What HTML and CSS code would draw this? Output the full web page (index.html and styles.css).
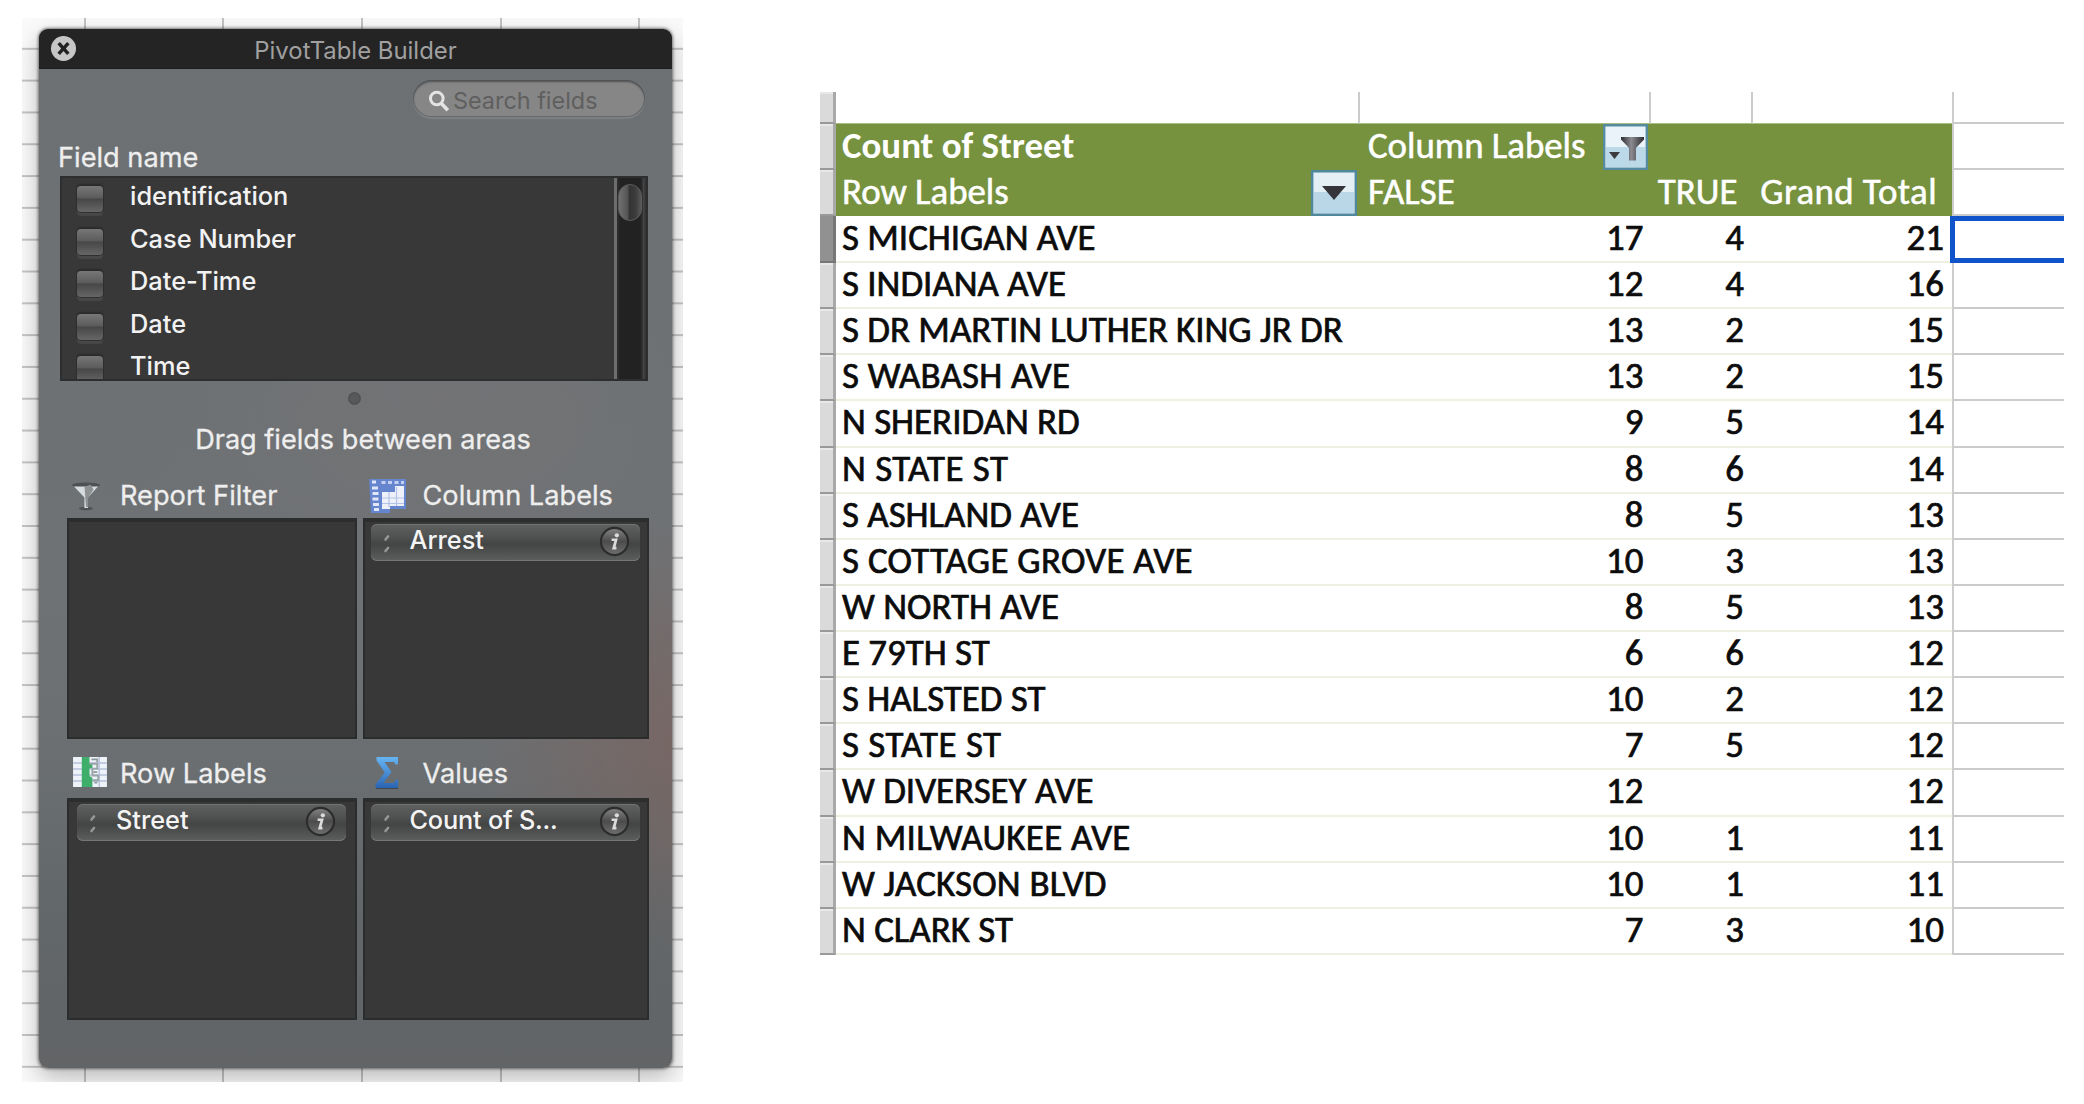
FILE: index.html
```html
<!DOCTYPE html>
<html lang="en">
<head>
<meta charset="utf-8">
<title>PivotTable Builder</title>
<link rel="stylesheet" href="styles.css">
</head>
<body>
<svg width="0" height="0" class="defs">
  <defs>
    <linearGradient id="knob" x1="0" y1="0" x2="0" y2="1"><stop offset="0" stop-color="#858585"/><stop offset=".5" stop-color="#4c4c4c"/><stop offset="1" stop-color="#6f6f6f"/></linearGradient>
    <linearGradient id="blue" x1="0" y1="0" x2="0" y2="1"><stop offset="0" stop-color="#66b4f2"/><stop offset=".5" stop-color="#4a8fd6"/><stop offset="1" stop-color="#2a63b0"/></linearGradient>
    <linearGradient id="steel" x1="0" y1="0" x2="1" y2="0"><stop offset="0" stop-color="#2f2f33"/><stop offset=".45" stop-color="#8a8a90"/><stop offset="1" stop-color="#2c2c30"/></linearGradient>
    <symbol id="info" viewBox="0 0 32 32">
      <circle cx="16" cy="16" r="14" fill="url(#knob)" stroke="#2c2c2c" stroke-width="2.2"/>
      <circle cx="18.400" cy="9.600" r="2.200" fill="#dcdcdc"/>
      <path d="M13 14.200h4.600l-2.400 8.600h2.800" fill="none" stroke="#dcdcdc" stroke-width="2.800"/>
    </symbol>
    <symbol id="grip" viewBox="0 0 8 20"><path d="M2.500 5.500l2.500-3M2.500 17l2.500-3" stroke="#979797" stroke-width="2.600" stroke-linecap="round"/></symbol>
  </defs>
</svg>
<main class="page">
  <section class="sheet-back">
    <div class="panel">
      <header class="titlebar">
        <svg class="close" viewBox="0 0 28 28"><circle cx="14" cy="14" r="13" fill="#c6c6c6"/><path d="M9 8.500l10 11M19 8.500l-10 11" stroke="#222" stroke-width="3.600"/></svg>
        <h1>PivotTable Builder</h1>
      </header>
      <div class="search">
        <svg viewBox="0 0 22 22"><circle cx="8.800" cy="8.500" r="6.300" fill="none" stroke="#e4e4e4" stroke-width="3"/><path d="M13.200 13.200l6.600 7" stroke="#e4e4e4" stroke-width="3.600"/></svg>
        <span>Search fields</span>
      </div>
      <div class="field-title">Field name</div>
      <div class="fields">
        <ul>
          <li><i></i>identification</li>
          <li><i></i>Case Number</li>
          <li><i></i>Date-Time</li>
          <li><i></i>Date</li>
          <li><i></i>Time</li>
        </ul>
        <div class="scroll"><div class="thumb"></div></div>
      </div>
      <div class="splitter"></div>
      <p class="hint">Drag fields between areas</p>
      <div class="areas">
        <div class="area">
          <h2 class="left">
            <svg class="i-filter" viewBox="0 0 30 30"><ellipse cx="14" cy="4" rx="14" ry="2.600" fill="#4e5051"/><ellipse cx="14" cy="27.500" rx="7" ry="1.800" fill="#505253"/><path d="M2 5.500h24L16 16.500V27h-3.600V16.500z" fill="#d5dcdf"/><path d="M12.500 6l6-2.500 3 5-5.500 8.500v9h-2z" fill="#8f9293"/></svg>
            Report Filter
          </h2>
          <div class="drop"></div>
        </div>
        <div class="area">
          <h2 class="right">
            <svg class="i-col" viewBox="0 0 38 34"><path d="M0 0h37v30H21v4H2z" fill="#6685cf"/><path d="M3 3h4M3 9h6M3.500 14.500h6M3.500 20h6M4 25.500h6M5 30.500h5" stroke="#dfe7f8" stroke-width="3"/><path d="M12.500 3.500h4M19 3.500h4M25.500 3.500h4M32 3.500h3" stroke="#c3d0f0" stroke-width="3"/><path d="M13 13h13V7h9v20H21v3h-8z" fill="#eef1fa"/><path d="M13 19h22M13 24.500h22M20 13v15M27.500 8v19" stroke="#b5c3e8" stroke-width="1.200"/></svg>
            Column Labels
          </h2>
          <div class="drop"><div class="pill"><svg class="grip"><use href="#grip"/></svg><span>Arrest</span><svg class="info"><use href="#info"/></svg></div></div>
        </div>
        <div class="area">
          <h2 class="left">
            <svg class="i-row" viewBox="0 0 35 32"><path d="M0 0h35v31H0z" fill="#eef2f9"/><path d="M0 6.200h35M0 12.400h35M0 18.600h35M0 24.800h35M27 0v31" stroke="#b5c2dc" stroke-width="1.400"/><path d="M9 0h8v6.500h3v5h-3v8l3 2v9.500H9z" fill="#3fae6b"/><path d="M17 7h8v5h-5v7h6v5h-6" fill="none" stroke="#9aa5a8" stroke-width="2"/><path d="M19 2.500h6v3M21 15.500h4M22 26.500h3" fill="none" stroke="#8b999b" stroke-width="1.800"/></svg>
            Row Labels
          </h2>
          <div class="drop"><div class="pill"><svg class="grip"><use href="#grip"/></svg><span>Street</span><svg class="info"><use href="#info"/></svg></div></div>
        </div>
        <div class="area">
          <h2 class="right">
            <svg class="i-sum" viewBox="0 0 24 32"><path d="M1 29h22v3H1z" fill="#43474d"/><path d="M1.500 0H23v7.500h-2.500L19 5H9.500l7 10-8 11H19l2-3.500h2V31H.5v-3.500L9.800 15.500 1.500 3.500z" fill="url(#blue)"/></svg>
            Values
          </h2>
          <div class="drop"><div class="pill"><svg class="grip"><use href="#grip"/></svg><span class="long">Count of S...</span><svg class="info"><use href="#info"/></svg></div></div>
        </div>
      </div>
    </div>
  </section>

  <section class="pivot">
    <div class="row top"><b></b><span></span><span></span><span></span><span></span><em></em></div>
    <div class="row head"><b></b><strong>Count of Street</strong><span class="split">Column Labels
      <svg class="btn wide" viewBox="0 0 45 46"><path d="M1 1h43v44H1z" fill="#e9f3f9"/><path d="M3 23h39v20H3z" fill="#bcd9ea"/><path d="M1.200 1.200h42.600v43.600H1.200z" fill="none" stroke="#558ba0" stroke-width="2.400"/><path d="M6 28h11l-5.500 7z" fill="#3b3b40"/><path d="M18 13h23v2.500l-8 8.500v12.500h-7V24l-8-8.500z" fill="url(#steel)"/></svg>
    </span><span></span><span></span><em></em></div>
    <div class="row head"><b></b><span class="split">Row Labels
      <svg class="btn" viewBox="0 0 46 46"><path d="M1 1h44v44H1z" fill="#e4eff5"/><path d="M3 22h40v21H3z" fill="#bad7e8"/><path d="M1.200 1.200h43.600v43.600H1.200z" fill="none" stroke="#4f889c" stroke-width="2.400"/><path d="M11 16h24L23 30z" fill="#34343a"/></svg>
    </span><span>FALSE</span><span class="t">TRUE</span><span class="t total">Grand Total</span><em></em></div>
    <div class="row active"><b></b><span>S MICHIGAN AVE</span><span>17</span><span>4</span><span>21</span><em></em></div>
    <div class="row"><b></b><span>S INDIANA AVE</span><span>12</span><span>4</span><span>16</span><em></em></div>
    <div class="row"><b></b><span>S DR MARTIN LUTHER KING JR DR</span><span>13</span><span>2</span><span>15</span><em></em></div>
    <div class="row"><b></b><span class="track-s">S WABASH AVE</span><span>13</span><span>2</span><span>15</span><em></em></div>
    <div class="row"><b></b><span>N SHERIDAN RD</span><span>9</span><span>5</span><span>14</span><em></em></div>
    <div class="row"><b></b><span class="track-l">N STATE ST</span><span>8</span><span>6</span><span>14</span><em></em></div>
    <div class="row"><b></b><span>S ASHLAND AVE</span><span>8</span><span>5</span><span>13</span><em></em></div>
    <div class="row"><b></b><span class="track-m">S COTTAGE GROVE AVE</span><span>10</span><span>3</span><span>13</span><em></em></div>
    <div class="row"><b></b><span>W NORTH AVE</span><span>8</span><span>5</span><span>13</span><em></em></div>
    <div class="row"><b></b><span>E 79TH ST</span><span>6</span><span>6</span><span>12</span><em></em></div>
    <div class="row"><b></b><span>S HALSTED ST</span><span>10</span><span>2</span><span>12</span><em></em></div>
    <div class="row"><b></b><span class="track-l">S STATE ST</span><span>7</span><span>5</span><span>12</span><em></em></div>
    <div class="row"><b></b><span>W DIVERSEY AVE</span><span>12</span><span></span><span>12</span><em></em></div>
    <div class="row"><b></b><span class="track-m">N MILWAUKEE AVE</span><span>10</span><span>1</span><span>11</span><em></em></div>
    <div class="row"><b></b><span class="track-s">W JACKSON BLVD</span><span>10</span><span>1</span><span>11</span><em></em></div>
    <div class="row"><b></b><span>N CLARK ST</span><span>7</span><span>3</span><span>10</span><em></em></div>
  </section>
</main>
</body>
</html>
```

FILE: styles.css
```css
* { box-sizing: border-box; }
body { margin: 0; background: #fff; font-family: Inter, "Liberation Sans", sans-serif; }
.defs { display: block; }
.page { display: flex; align-items: flex-start; height: 1104px; padding: 18px 20px 0 22px; }

/* worksheet behind the builder */
.sheet-back {
  width: 661px; height: 1064px; flex: none; overflow: hidden; padding: 11px 11px 15px 17px;
  background:
    linear-gradient(#c2c2c2, #c2c2c2) 62px 0 / 2px 100% no-repeat,
    linear-gradient(#c2c2c2, #c2c2c2) 200px 0 / 2px 100% no-repeat,
    linear-gradient(#c2c2c2, #c2c2c2) 339px 0 / 2px 100% no-repeat,
    linear-gradient(#c2c2c2, #c2c2c2) 477.500px 0 / 2px 100% no-repeat,
    linear-gradient(#c2c2c2, #c2c2c2) 616px 0 / 2px 100% no-repeat,
    linear-gradient(transparent 30px, #c4c4c4 30px) 0 0 / 100% 31.820px,
    #fafafa;
}
.panel {
  height: 1039px; border-radius: 9px; overflow: hidden;
  box-shadow: 0 0 3px 1px rgba(40, 40, 40, .6), 0 9px 24px rgba(0, 0, 0, .27);
  background:
    radial-gradient(circle 230px at 660px 710px, rgba(125, 98, 92, .7), rgba(125, 98, 92, 0)),
    radial-gradient(ellipse 330px 260px at 400px 370px, rgba(116, 115, 117, .7), rgba(116, 115, 117, 0)),
    linear-gradient(180deg, #6c7073 0, #6e7275 55%, #6b6f72 70%, #62676a 85%, #626466 100%);
}
.titlebar { display: flex; align-items: center; height: 40px; background: #242424; border-bottom: 1px solid #1c1c1c; padding-left: 11px; }
.close { width: 27px; height: 27px; flex: none; }
h1 { flex: 1; margin: 4px 0 0 -38px; text-align: center; font: 400 23.900px/30px Inter, sans-serif; color: #a0a0a0; }
.search {
  display: flex; align-items: center; width: 232px; height: 37px; margin: 11px 0 0 374px; padding: 5px 0 0 15px;
  border-radius: 19px; background: #868686; color: #5f5f5f; font-size: 23.400px; line-height: 30px;
  box-shadow: inset 0 2px 2px #505254, inset 0 0 0 1px #66696b, 0 2px 1px #7d8184;
}
.search svg { width: 22px; height: 22px; margin-right: 3px; }
.field-title { margin: 25px 0 2px 19px; height: 32px; font-size: 27.200px; line-height: 32px; color: #eee; }
.field-title, .hint, h2 { -webkit-text-stroke: .3px; }
.fields { display: flex; width: 588px; height: 205px; margin-left: 21px; overflow: hidden; background: #383838; border: 2px solid #2d2e2f; }
ul { list-style: none; margin: -3px 0 0; padding: 0 0 0 15px; flex: 1; color: #f2f2f2; font-weight: 500; font-size: 25.400px; }
li { display: flex; align-items: center; height: 42.500px; line-height: 42px; }
li i { width: 26px; height: 26px; margin: 6px 27px 0 0; border-radius: 4px; background: linear-gradient(#777 0, #5c5c5c 45%, #474747 50%, #666 100%); box-shadow: 0 -2px 2px #2b2b2b, 0 0 0 1px #303030, 0 4px 1px #484848; }
.scroll { width: 32px; border-left: 3px solid #6c6e6e; padding: 6px 3px 0 1px; background: linear-gradient(90deg, #303030 0, #222 12% 80%, #333 88%, #484848 90%, #303030 100%); }
.thumb { height: 37px; width: 24px; border-radius: 12px; background: linear-gradient(90deg, #707070, #565656 38%, #343434 48%, #3c3c3c 75%, #585858); border: 1px solid #5c5c5c; }
.splitter { width: 13px; height: 13px; margin: 11px 0 0 309px; border-radius: 50%; background: #57595a; border: 2px solid #505253; }
.hint { margin: 19px 0 0 15px; text-align: center; font-size: 27.100px; line-height: 32px; color: #eee; }
.areas { display: grid; grid-template-columns: 290px 286px; grid-template-rows: 278px 281px; column-gap: 5.500px; margin: 5px 0 0 28px; }
.area { display: flex; flex-direction: column; padding-top: 13px; }
h2 { display: flex; align-items: center; height: 46px; margin: 0; font: 400 27.200px/34px Inter, sans-serif; color: #eee; }
.area:nth-child(n+3) h2 { padding-bottom: 3px; }
.area:nth-child(n+3) h2 svg { margin-top: -2px; }
h2.left { padding-left: 5px; }
h2.right { padding-left: 6px; }
h2 svg { flex: none; margin-top: -1px; }
.i-filter { width: 30px; height: 30px; margin-right: 18px; }
.i-col { width: 38px; height: 34px; margin-right: 16px; }
.i-row { width: 36px; height: 31px; margin-right: 12px; }
.i-sum { width: 24px; height: 32px; margin: 0 24px 0 6px; }
.drop { height: 221px; flex: none; background: #383838; border: 2px solid #2b2c2c; border-top: 4px solid #2c2d2d; padding: 2px 7px 0 6px; }
.area:nth-child(n+3) .drop { height: 222px; }
.area:first-child .drop, .area:nth-child(3) .drop { padding-left: 8px; padding-right: 9px; }
.pill {
  display: flex; align-items: center; height: 37px; padding: 0 10px 0 12px; border-radius: 6px; color: #f4f4f4;
  background: linear-gradient(#5f6060 0, #505151 35%, #434444 55%, #5d5e5e 100%);
  box-shadow: inset 0 1px #717272, inset 0 -1px #777;
}
.pill span { flex: 1; font-weight: 500; font-size: 25.300px; line-height: 32px; margin-top: -6px; }
.pill .long { letter-spacing: -.2px; }
.grip { width: 8px; height: 20px; margin: 3px 19px 0 0; }
.info { width: 31px; height: 31px; margin-top: -2px; }

/* worksheet with the pivot table */
.pivot { width: 1244px; height: 864px; margin: 74px 0 0 137px; overflow: hidden; color: #0c0c0c; font-family: Carlito, Calibri, Lato, sans-serif; font-size: 36.900px; -webkit-text-stroke: .7px; }
.row { display: grid; grid-template-columns: 16px 524px 291px 101.500px 199.500px 1fr; height: 46.130px; line-height: 42px; white-space: nowrap; }
.row > span, .row > strong { border-bottom: 2px solid #edf1df; padding: 0 7.500px 0 6px; text-align: right; }
.row > span:nth-child(4) { padding-right: 8.500px; }
.row > span:nth-child(5) { padding-right: 8px; }
.row > span:nth-child(2), .row > strong { text-align: left; }
.row > .track-s { letter-spacing: .2px; }
.row > .track-m { letter-spacing: .3px; }
.row > .track-l { letter-spacing: .5px; }
.row > b { background: #dadada; border-right: 3px solid #a9a9a9; border-bottom: 2px solid #999; box-shadow: inset 0 2px #e8e8e8; }
.row > em { border-left: 2px solid #cdcdcd; border-bottom: 2px solid #cbcbcb; }
.row.top { height: 31.500px; }
.row.top > span { border-right: 2px solid #ccc; border-bottom: 1px solid #a9bd83; }
.row.top > span:nth-child(5) { border-right: 0; }
.row.head { height: 46px; color: #fff; line-height: 43px; }
.row.head > strong { background: #76923f; border-bottom: 0; -webkit-text-stroke: 0; }
.row.head > span { background: #76923f; border-bottom: 0; text-align: left; -webkit-text-stroke: .5px; }
.row.head > span:nth-child(3) { padding-left: 8px; }
.row.head > span.split { display: flex; justify-content: space-between; align-items: flex-start; padding-right: 3px; letter-spacing: -.05px; }
.row.head > span.t { text-align: right; padding-right: 15px; padding-left: 0; }
.row.head > span.total { letter-spacing: .4px; }
.btn { width: 46px; height: 46px; flex: none; }
.btn.wide { width: 45px; }
.row.active { height: 47.500px; line-height: 43px; }
.active > b { background: #919191; box-shadow: none; border-color: #777; }
.row.active > em { border: 5px solid #1153cb; border-right: 0; margin-left: -2px; }
```
